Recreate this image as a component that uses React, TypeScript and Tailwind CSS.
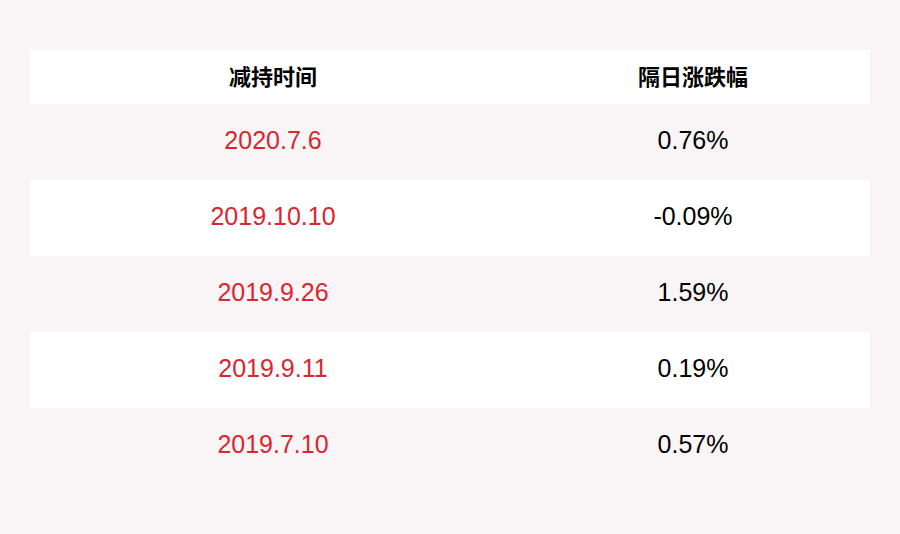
const rows = [
  { date: '2020.7.6', change: '0.76%' },
  { date: '2019.10.10', change: '-0.09%' },
  { date: '2019.9.26', change: '1.59%' },
  { date: '2019.9.11', change: '0.19%' },
  { date: '2019.7.10', change: '0.57%' },
];

export default function App() {
  return (
    <div className="w-[900px] h-[534px] bg-[#f9f5f6] px-[30px] py-[50px]">
      <div className="flex flex-col">
        {/* header */}
        <div
          className="flex h-[54px] items-center bg-white font-bold text-[22px] text-black"
          style={{ fontFamily: '"Liberation Sans", "Noto Sans CJK SC", sans-serif' }}
        >
          <div className="w-[486px] text-center">减持时间</div>
          <div className="w-[354px] text-center">隔日涨跌幅</div>
        </div>

        {rows.map((row, i) => (
          <div
            key={row.date}
            className={`flex h-[76px] items-center text-[25px] ${i % 2 === 1 ? 'bg-white' : ''}`}
            style={{ fontFamily: '"Liberation Sans", Arial, sans-serif' }}
          >
            <div className="w-[486px] text-center text-[#d9262f] -mt-[3px]">{row.date}</div>
            <div className="w-[354px] text-center text-black -mt-[2px]">{row.change}</div>
          </div>
        ))}
      </div>
    </div>
  );
}
